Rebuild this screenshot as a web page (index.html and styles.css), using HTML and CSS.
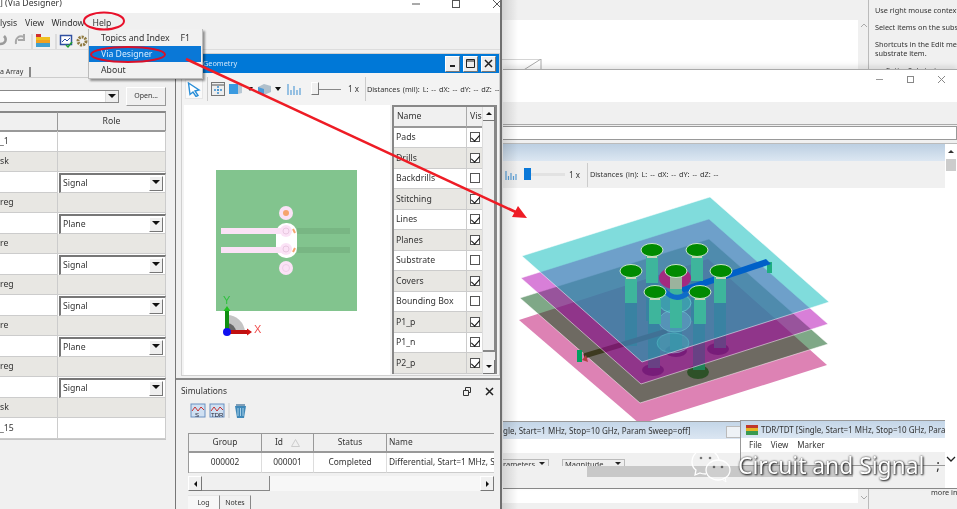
FILE: index.html
```html
<!DOCTYPE html>
<html lang="en">
<head>
<meta charset="utf-8">
<title>Via Designer</title>
<link rel="stylesheet" href="styles.css">
</head>
<body>
<div class="desk">

  <section class="win-back">
    <div class="back-main">
      <div class="back-white">
        <svg class="back-corner" width="40" height="12" viewBox="0 0 40 12"><path d="M0 0H39V12M39 0L20 12" fill="none" stroke="#aaa"/></svg>
        <svg class="back-up" width="8" height="5" viewBox="0 0 8 5"><path d="M1 4L4 1L7 4" fill="none" stroke="#aaa"/></svg>
        <svg class="back-down" width="8" height="5" viewBox="0 0 8 5"><path d="M1 1L4 4L7 1" fill="none" stroke="#aaa"/></svg>
      </div>
    </div>
    <div class="back-help">
      <p class="h1">Use right mouse context menu</p>
      <p class="h2">Select items on the substrate</p>
      <p class="h3">Shortcuts in the Edit menu<br>substrate item.</p>
      <p class="h4">Entire Substrate</p>
      <p class="more">more info</p>
    </div>
  </section>

  <section class="win-b">
    <header class="b-title">
      <svg width="87" height="20" viewBox="0 0 87 20"><path d="M6 9.500H13" stroke="#999"/><rect x="37.500" y="6.500" width="6" height="6" fill="none" stroke="#888"/><path d="M68 6l7 7M75 6l-7 7" stroke="#888" fill="none"/></svg>
    </header>
    <div class="b-menu"></div>
    <div class="b-input"></div>
    <div class="b-doc">
      <div class="b-main">
        <div class="b-blue"></div>
        <div class="b-tools">
          <svg class="bars" width="12" height="10" viewBox="0 0 12 10"><path d="M1 1V10M3.500 6V10M6 3V10M8.500 6V10M11 4V10" stroke="#5aa0d8" stroke-width="1.200"/></svg>
          <div class="b-slider"><span class="b-thumb"></span></div>
          <span class="mult">1 x</span>
          <span class="sep"></span>
          <span class="dist">Distances (in): L: -- dX: -- dY: -- dZ: --</span>
        </div>
        <div class="b-canvas">
          <svg class="model" width="442" height="233" viewBox="503 187 442 233">
            <polygon points="519,319 708,258 827,364 640,423" fill="#dd82b4"/>
            <g class="stems-low">
              <ellipse cx="653" cy="369" rx="11" ry="6" fill="#7a1f70"/>
              <ellipse cx="698" cy="371" rx="11" ry="7" fill="#5d5040"/>
              <ellipse cx="718" cy="348" rx="11" ry="6" fill="#7a1f70"/>
              <ellipse cx="676" cy="350" rx="11" ry="6" fill="#7a1f70"/>
              <rect x="648" y="295" width="12" height="72" fill="#3eb59c"/>
              <rect x="693" y="295" width="12" height="74" fill="#3eb59c"/>
              <rect x="625" y="275" width="12" height="70" fill="#3eb59c"/>
              <rect x="714" y="275" width="12" height="72" fill="#3eb59c"/>
              <rect x="670" y="275" width="12" height="74" fill="#3eb59c"/>
              <rect x="646" y="250" width="12" height="70" fill="#3eb59c"/>
              <rect x="691" y="250" width="12" height="70" fill="#3eb59c"/>
            </g>
            <polygon points="520,297 709,238 828,343 640,402" fill="#00510f" fill-opacity=".5" stroke="#fff" stroke-opacity=".5"/>
            <path d="M584 355L667 330" stroke="#3d3a20" stroke-width="5"/>
            <polygon points="521,277 709,218 828,323 641,383" fill="#b100b1" fill-opacity=".5" stroke="#fff" stroke-opacity=".5"/>
            <ellipse cx="673" cy="342" rx="16" ry="10" fill="#7fc0c0" fill-opacity=".3" stroke="#bde" stroke-opacity=".4"/>
            <ellipse cx="675" cy="320" rx="16" ry="11" fill="#c0a0e0" fill-opacity=".45" stroke="#dde" stroke-opacity=".5"/>
            <ellipse cx="675" cy="302" rx="16" ry="10" fill="#50c8b0" fill-opacity=".45" stroke="#dff" stroke-opacity=".6"/>
            <polygon points="522,255 710,196 829,301 642,361" fill="#0fbdbd" fill-opacity=".53" stroke="#fff" stroke-opacity=".5"/>
            <rect x="577" y="349" width="5" height="12" fill="#00a060"/>
            <path d="M582 359L588 361L586 354Z" fill="#b04040"/>
            <rect x="767" y="261" width="5" height="11" fill="#1fae80"/>
            <ellipse cx="675" cy="277" rx="16" ry="11" fill="#a32a80"/>
            <path d="M680 287L766 258L771 263L684 292Z" fill="#0060c8"/>
            <rect x="670" y="275" width="12" height="52" fill="#3eb59c"/>
            <rect x="670" y="276" width="12" height="12" fill="#9bb39d"/>
            <path d="M664 289Q675 302 688 292" fill="none" stroke="#0f6cc8" stroke-width="5"/>
            <rect x="646" y="252" width="12" height="30" fill="#3eb59c"/>
            <rect x="691" y="252" width="12" height="28" fill="#3eb59c"/>
            <rect x="625" y="273" width="12" height="29" fill="#3eb59c"/>
            <rect x="714" y="273" width="12" height="29" fill="#3eb59c"/>
            <rect x="649" y="295" width="12" height="28" fill="#3eb59c"/>
            <rect x="694" y="295" width="12" height="28" fill="#3eb59c"/>
            <g fill="#c8d0b4">
              <rect x="647" y="254" width="10" height="3"/>
              <rect x="692" y="254" width="10" height="3"/>
              <rect x="626" y="275" width="10" height="3"/>
              <rect x="716" y="275" width="10" height="3"/>
              <rect x="650" y="296" width="10" height="3"/>
              <rect x="695" y="296" width="10" height="3"/>
            </g>
            <g fill="#008a00" stroke="#c8e8c8" stroke-width="1">
              <ellipse cx="652" cy="249" rx="11" ry="6.500"/>
              <ellipse cx="697" cy="249" rx="11" ry="6.500"/>
              <ellipse cx="631" cy="270" rx="11" ry="6.500"/>
              <ellipse cx="721" cy="270" rx="11" ry="6.500"/>
              <ellipse cx="676" cy="270" rx="11" ry="6.500"/>
              <ellipse cx="655" cy="291" rx="11" ry="6.500"/>
              <ellipse cx="700" cy="291" rx="11" ry="6.500"/>
            </g>
          </svg>
        </div>
        <div class="b-result">
          <div class="res-title"><span>gle, Start=1 MHz, Stop=10 GHz, Param Sweep=off]</span><span class="res-btn"></span></div>
          <div class="res-menu"></div>
          <div class="res-bar">
            <span class="drop d1">rameters<i></i></span>
            <span class="drop d2">Magnitude<i></i></span>
          </div>
          <div class="res-bottom"><span class="res-scroll"></span></div>
        </div>
      </div>
      <div class="b-scroll"><span class="b-up"></span><span class="b-scrollthumb"></span></div>
    </div>
    <section class="win-tdr">
      <div class="tdr-title">
        <svg width="12" height="10" viewBox="0 0 12 10"><rect width="12" height="3" fill="#c0392b"/><rect y="3" width="12" height="3" fill="#e6b422"/><rect y="6" width="12" height="4" fill="#3a9a50"/></svg>
        <span>TDR/TDT [Single, Start=1 MHz, Stop=10 GHz, Param Sweep=off]</span>
      </div>
      <div class="tdr-menu"><span>File</span><span>View</span><span>Marker</span></div>
      <div class="tdr-bar"></div>
    </section>
  </section>

  <section class="win-a">
    <header class="a-title">
      <span>] (Via Designer)</span>
      <div class="a-ctl">
        <svg width="100" height="10" viewBox="0 0 100 10"><path d="M6 4H14" stroke="#555"/><rect x="46.500" y="0.500" width="7" height="7" fill="none" stroke="#555"/><path d="M87 0l8 8M95 0l-8 8" stroke="#555" fill="none"/></svg>
      </div>
    </header>
    <nav class="a-menu"><span class="m1">lysis</span><span class="m2">View</span><span class="m3">Window</span><span class="m4">Help</span></nav>
    <div class="a-tools">
      <svg width="96" height="17" viewBox="0 0 96 17">
        <path d="M0 11C6 11 7 6 4 3" fill="none" stroke="#9a9a9a" stroke-width="2.500"/>
        <path d="M16 11C15 5 19 2 24 4M24 1V7H18" fill="none" stroke="#a8a8a8" stroke-width="2"/>
        <path d="M32 1V16" stroke="#c8c8c8"/>
        <rect x="36" y="1" width="5" height="3" fill="#d03030"/><rect x="36" y="4" width="14" height="3" fill="#f0c020"/><rect x="36" y="7" width="14" height="3" fill="#f0a020"/><rect x="36" y="10" width="14" height="4" fill="#40a0d0"/>
        <path d="M56 1V16" stroke="#c8c8c8"/>
        <rect x="60.500" y="2.500" width="11" height="9" fill="#fff" stroke="#3050a0" stroke-width="1.500"/>
        <path d="M62 9L65 6L67 8L70 5" stroke="#3050a0" fill="none"/><path d="M66 12L68 14L72 9" stroke="#20a030" stroke-width="1.500" fill="none"/>
        <circle cx="82" cy="8" r="4" fill="none" stroke="#8f7a40" stroke-width="3" stroke-dasharray="2 1"/>
      </svg>
    </div>
    <div class="a-body">
      <aside class="pane">
        <div class="tabs"><span class="tab">a Array</span></div>
        <div class="file-row">
          <div class="combo"><span class="combo-btn"><i class="caret"></i></span></div>
          <button class="open">Open...</button>
        </div>
        <div class="stack">
          <div class="hc"></div><div class="hc">Role</div>
          <div class="c">_1</div><div class="c"></div>
          <div class="c g">sk</div><div class="c g"></div>
          <div class="c"></div><div class="c sel"><span>Signal</span><b class="sel-btn"><i class="caret"></i></b></div>
          <div class="c g">reg</div><div class="c g"></div>
          <div class="c"></div><div class="c sel"><span>Plane</span><b class="sel-btn"><i class="caret"></i></b></div>
          <div class="c g">re</div><div class="c g"></div>
          <div class="c"></div><div class="c sel"><span>Signal</span><b class="sel-btn"><i class="caret"></i></b></div>
          <div class="c g">reg</div><div class="c g"></div>
          <div class="c"></div><div class="c sel"><span>Signal</span><b class="sel-btn"><i class="caret"></i></b></div>
          <div class="c g">re</div><div class="c g"></div>
          <div class="c"></div><div class="c sel"><span>Plane</span><b class="sel-btn"><i class="caret"></i></b></div>
          <div class="c g">reg</div><div class="c g"></div>
          <div class="c"></div><div class="c sel"><span>Signal</span><b class="sel-btn"><i class="caret"></i></b></div>
          <div class="c g">sk</div><div class="c g"></div>
          <div class="c">_15</div><div class="c"></div>
        </div>
      </aside>
      <main class="work">
        <section class="geo">
          <div class="geo-title">
            <span class="geo-name">Geometry</span>
            <div class="geo-btns">
              <span class="wb"><svg width="9" height="9" viewBox="0 0 9 9"><path d="M2 7H7" stroke="#222" stroke-width="2"/></svg></span>
              <span class="wb"><svg width="9" height="9" viewBox="0 0 9 9"><path d="M.5.5H8.500V8.500H.5Z M.5 2H8.500" fill="none" stroke="#222"/></svg></span>
              <span class="wb"><svg width="9" height="9" viewBox="0 0 9 9"><path d="M1 1L8 8M8 1L1 8" stroke="#222" stroke-width="1.500"/></svg></span>
            </div>
          </div>
          <div class="geo-tools">
            <span class="pick"><svg width="14" height="15" viewBox="0 0 14 15"><path d="M1.500 1L12 8L8 9L11 13.500L9 14.500L6 10L3 12.500Z" fill="#fff" stroke="#2a8fd8" stroke-width="1.400"/></svg></span>
            <span class="sep"></span>
            <svg class="ti" width="71" height="14" viewBox="0 0 71 14">
              <rect x=".5" y=".5" width="13" height="13" fill="#eee" stroke="#777"/><path d="M1 3H13" stroke="#555"/><path d="M7 4V12M3 8H11" stroke="#3a8fd0" stroke-dasharray="2 1" stroke-width="1.500"/>
              <rect x="18" y="2" width="9" height="10" fill="#3a9ae0"/><path d="M27 2L31 4V11L27 12Z" fill="#b8c8d4"/>
              <path d="M36 5H42L39 9Z" fill="#111"/>
              <path d="M47 5L53 2L60 4V10L53 13L47 10Z" fill="#b0c0cc"/><path d="M47 5L53 7V13L47 10Z" fill="#4a9ad8"/>
              <path d="M64 5H70L67 9Z" fill="#111"/>
            </svg>
            <svg class="ti2" width="14" height="11" viewBox="0 0 14 11"><path d="M1 0V11M4 6V11M7 2V11M10 6V11M13 4V11" stroke="#5aa0d8" stroke-width="1.200"/></svg>
            <div class="geo-slider"><span class="geo-thumb"></span></div>
            <span class="mult">1 x</span>
            <span class="sep s2"></span>
            <span class="dist">Distances (mil): L: -- dX: -- dY: -- dZ: --</span>
          </div>
          <div class="geo-body">
            <div class="geo-canvas">
              <svg width="206" height="270" viewBox="184 105 206 270">
                <rect x="216" y="170" width="141" height="141" fill="#82c48e"/>
                <rect x="297" y="228" width="53" height="6" fill="#78b683"/>
                <rect x="297" y="247" width="53" height="6" fill="#78b683"/>
                <rect x="276" y="223" width="21" height="35" rx="10" fill="#fff"/>
                <rect x="221" y="228" width="61" height="6" fill="#fbe2f6"/>
                <rect x="221" y="247" width="61" height="6" fill="#fbe2f6"/>
                <circle cx="286" cy="231" r="6" fill="#fbe2f6"/><circle cx="286" cy="231" r="3" fill="none" stroke="#e8c8e0"/>
                <circle cx="286" cy="249" r="6" fill="#fbe2f6"/><circle cx="286" cy="249" r="3" fill="none" stroke="#e8c8e0"/>
                <circle cx="286" cy="213" r="7" fill="#fbe2f6"/><circle cx="286" cy="213" r="3" fill="#f6a46e"/>
                <circle cx="286" cy="268" r="7" fill="#fbe2f6"/><circle cx="286" cy="268" r="3.500" fill="none" stroke="#eed0e8"/>
                <path d="M293 229L295 233M295 248L293 252" stroke="#f6a46e" stroke-width="2"/>
                <path d="M227 332V315A18 18 0 0 1 245 332Z" fill="#c4c4c4"/>
                <path d="M227 332V323A9 9 0 0 1 236 332Z" fill="#666"/>
                <path d="M227 332V311" stroke="#109010" stroke-width="4"/><path d="M223.500 311L227 306L230.500 311Z" fill="#20c020"/>
                <path d="M227 332H247" stroke="#c01010" stroke-width="4"/><path d="M247 328.500L252 332L247 335.500Z" fill="#d01010"/>
                <circle cx="227" cy="332" r="4" fill="#1010f0"/>
                <text x="223" y="304" class="ax-y">Y</text>
                <text x="254" y="333" class="ax-x">X</text>
              </svg>
            </div>
            <div class="vis">
              <div class="vis-grid">
                <div class="vh">Name</div><div class="vh vh2">Vis</div>
                <div class="vc">Pads</div><div class="vk"><i class="ck on"></i></div>
                <div class="vc g">Drills</div><div class="vk g"><i class="ck on"></i></div>
                <div class="vc">Backdrills</div><div class="vk"><i class="ck"></i></div>
                <div class="vc g">Stitching</div><div class="vk g"><i class="ck on"></i></div>
                <div class="vc">Lines</div><div class="vk"><i class="ck on"></i></div>
                <div class="vc g">Planes</div><div class="vk g"><i class="ck on"></i></div>
                <div class="vc">Substrate</div><div class="vk"><i class="ck"></i></div>
                <div class="vc g">Covers</div><div class="vk g"><i class="ck on"></i></div>
                <div class="vc">Bounding Box</div><div class="vk"><i class="ck"></i></div>
                <div class="vc g">P1_p</div><div class="vk g"><i class="ck on"></i></div>
                <div class="vc">P1_n</div><div class="vk"><i class="ck on"></i></div>
                <div class="vc g">P2_p</div><div class="vk g"><i class="ck on"></i></div>
              </div>
              <div class="vis-scroll">
                <span class="vs-btn"><i class="up"></i></span>
                <span class="vs-track"></span>
                <span class="vs-btn"><i class="caret small"></i></span>
              </div>
            </div>
          </div>
        </section>
        <section class="sims">
          <div class="sims-head">
            <span>Simulations</span>
            <svg width="32" height="9" viewBox="0 0 32 9"><path d="M1.500 3.500H6.500V8.500H1.500ZM3.500 3V.5H8.500V5.500H7" fill="none" stroke="#333"/><path d="M24 1L31 8M31 1L24 8" stroke="#222" stroke-width="1.500"/></svg>
          </div>
          <div class="sims-tools">
            <svg width="62" height="17" viewBox="0 0 62 17">
              <rect x="2" y="2" width="14" height="13" fill="#cfe0f2" stroke="#6a90c0"/><path d="M3 9L6 5L9 9L12 5L15 8" stroke="#c83030" fill="none"/><text x="6" y="15" class="mini">S</text>
              <rect x="21" y="2" width="14" height="13" fill="#cfe0f2" stroke="#6a90c0"/><path d="M22 9L25 5L28 9L31 5L34 8" stroke="#c83030" fill="none"/><text x="22" y="15" class="mini">TDR</text>
              <path d="M40 1V16" stroke="#ccc"/>
              <path d="M46 4H57L55 16H48Z" fill="#3f88b8"/><path d="M47 2H56V4H47Z" fill="#7f9fb8"/><path d="M49 6V14M51.500 6V14M54 6V14" stroke="#a8d0e8"/>
            </svg>
          </div>
          <div class="sim-table">
            <div class="st-h">Group</div><div class="st-h id">Id<svg width="9" height="8" viewBox="0 0 9 8"><path d="M4.500.5L8.500 7.500H.5Z" fill="none" stroke="#ccc"/></svg></div><div class="st-h">Status</div><div class="st-h name">Name</div>
            <div class="st-c">000002</div><div class="st-c">000001</div><div class="st-c">Completed</div><div class="st-c name">Differential, Start=1 MHz, Stop=10 GHz</div>
          </div>
          <div class="hscroll">
            <span class="hbtn"><i class="left"></i></span>
            <span class="hthumb"></span>
            <span class="hrest"></span>
            <span class="hbtn"><i class="right"></i></span>
          </div>
          <div class="log-tabs"><span class="lt on">Log</span><span class="lt">Notes</span></div>
        </section>
      </main>
    </div>
  </section>

  <div class="help-menu">
    <div class="hm-item"><span>Topics and Index</span><span>F1</span></div>
    <div class="hm-item hm-on"><span>Via Designer</span></div>
    <div class="hm-item"><span>About</span></div>
  </div>

  <svg class="anno" width="957" height="509" viewBox="0 0 957 509">
    <ellipse cx="104" cy="21" rx="20" ry="8.500" fill="none" stroke="#e8102a" stroke-width="2"/>
    <ellipse cx="128" cy="54.500" rx="37" ry="7.500" fill="none" stroke="#d8102a" stroke-width="2"/>
    <path d="M186 59L520 214" stroke="#ee1c25" stroke-width="2.500"/>
    <path d="M527 218L512 217L518 206Z" fill="#ee1c25"/>
  </svg>

  <div class="mark">
    <svg class="mark-icon" width="47" height="36" viewBox="0 0 47 36">
      <path d="M15 27C13 27 11 27 9 26L4 28L5 23C2 21 1 18 1 15C1 8 7 2 14 2C21 2 27 7 28 13" fill="none" stroke="#fff" stroke-width="1.300"/>
      <ellipse cx="27" cy="23" rx="12" ry="10" fill="#fff" fill-opacity=".12" stroke="#fff" stroke-width="1.300"/>
      <path d="M31 32L35 35L34 30" fill="none" stroke="#fff"/>
      <circle cx="10" cy="11" r="1.300" fill="#777"/><circle cx="19" cy="11" r="1.300" fill="#777"/>
      <circle cx="23" cy="20" r="1.300" fill="#666"/><circle cx="31" cy="20" r="1.300" fill="#666"/>
    </svg>
    <span class="mark-text">Circuit and Signal</span>
    <span class="mark-dot">;</span>
    <svg class="mark-chev" width="10" height="6" viewBox="0 0 10 6"><path d="M1 1L5 5L9 1" fill="none" stroke="#222" stroke-width="1.300"/></svg>
  </div>
</div>
</body>
</html>
```

FILE: styles.css
```css
* { box-sizing: border-box; }
html, body { margin: 0; padding: 0; }
body {
  width: 957px;
  height: 509px;
  overflow: hidden;
  background: #f0f0f0;
  font: 8.700px/1.200 "Noto Sans", "DejaVu Sans", sans-serif;
  color: #333;
}
.desk { position: relative; width: 957px; height: 509px; overflow: hidden; filter: blur(.35px); }
p { margin: 0; }
i, b { font-style: normal; font-weight: normal; display: block; }

/* back window */
.win-back {
  position: absolute; left: 502px; top: 0; width: 455px; height: 509px;
  display: grid; grid-template-columns: 367px 88px; background: #f0f0f0;
}
.back-main { padding-top: 20px; padding-bottom: 6px; border-right: 1px solid #bbb; }
.back-white { position: relative; height: 100%; background: #fff; margin-right: 10px; }
.back-corner { position: absolute; left: 0; top: 39px; }
.back-up, .back-down { position: absolute; left: 358px; }
.back-up { top: 3px; }
.back-down { bottom: 3px; }
.back-help { position: relative; padding: 6px 0 0 6px; white-space: nowrap; font-size: 7.300px; overflow: hidden; }
.back-help .h1, .back-help .h2, .back-help .h3 { line-height: 9px; margin-bottom: 8px; }
.back-help .h4 { padding-left: 11px; }
.more { position: absolute; left: 62px; top: 488px; }

/* front window */
.win-b {
  position: absolute; left: 503px; top: 69px; width: 454px; height: 420px;
  background: #f0f0f0; border-top: 1px solid #aaa; border-bottom: 1px solid #888;
  box-shadow: 0 -3px 5px rgba(0,0,0,.1);
  display: flex; flex-direction: column;
}
.b-title { height: 32px; background: #fff; display: flex; justify-content: flex-end; }
.b-menu { height: 23px; background: #f0f0f0; border-bottom: 1px solid #aaa; }
.b-input { height: 14px; margin: 1px 0 0; background: #fff; border: 1px solid #999; border-left: 0; }
.b-doc { flex: 1; margin-top: 3px; display: flex; min-height: 0; border-top: 1px solid #bbb; }
.b-main { width: 442px; display: flex; flex-direction: column; }
.b-blue { height: 17px; background: linear-gradient(#bccfe2, #dce7f2); flex: none; }
.b-tools { height: 27px; flex: none; display: flex; align-items: center; background: #f0f0f0; font-size: 7.300px; white-space: nowrap; }
.bars { margin-left: 2px; }
.b-slider { position: relative; width: 41px; height: 3px; margin-left: 7px; background: #e2e2e2; }
.b-thumb { position: absolute; left: 0; top: -5px; width: 7px; height: 12px; background: #0a78d8; }
.mult { font-size: 8px; margin-left: 4px; }
.sep { width: 1px; height: 24px; background: #ccc; flex: none; }
.b-tools .sep { margin-left: 7px; margin-right: 2px; }
.dist { word-spacing: 1px; }
.b-canvas { flex: none; height: 233px; background: #fff; overflow: hidden; }
.model { display: block; }
.b-result { flex: 1; display: flex; flex-direction: column; min-height: 0; font-size: 8px; }
.res-title { height: 18px; background: linear-gradient(#c4d6e8, #dbe6f2); border-top: 1px solid #999; display: flex; align-items: center; white-space: nowrap; position: relative; }
.res-btn { position: absolute; left: 223px; top: 4px; width: 15px; height: 12px; background: #eef2f6; border: 1px solid #bbb; }
.res-menu { height: 14px; background: #fff; flex: none; }
.res-bar { height: 13px; flex: none; display: flex; align-items: flex-end; overflow: hidden; }
.drop { height: 7px; background: #eee; border: 1px solid #bbb; border-bottom: 0; font-size: 7.500px; line-height: 9px; display: flex; justify-content: space-between; overflow: hidden; }
.drop i { width: 0; height: 0; margin: 2px 3px; border: 3px solid transparent; border-top-color: #222; }
.d1 { width: 46px; border-left: 0; }
.d2 { width: 63px; margin-left: 13px; padding-left: 2px; }
.res-bottom { flex: 1; background: #f0f0f0; }
.res-scroll { display: block; margin-left: 84px; width: 266px; height: 11px; background: #c8c8c8; }
.b-scroll { flex: 1; background: #fff; display: flex; flex-direction: column; align-items: center; }
.b-up { width: 0; height: 0; margin: 3px 0 6px; border: 3px solid transparent; border-bottom-color: #333; }
.b-scrollthumb { width: 10px; height: 12px; background: #ccc; }
.win-tdr {
  position: absolute; left: 237px; top: 350px; width: 205px; height: 46px;
  background: #f0f0f0; border: 1px solid #999; border-right: 0; overflow: hidden; font-size: 8px;
}
.tdr-title { height: 17px; background: linear-gradient(#c4d6e8, #dbe6f2); display: flex; align-items: center; gap: 3px; padding-left: 5px; white-space: nowrap; }
.tdr-title svg { flex: none; }
.tdr-menu { height: 14px; background: #fff; display: flex; align-items: center; gap: 9px; padding-left: 8px; }
.tdr-bar { height: 14px; }

/* left window */
.win-a {
  position: absolute; left: 0; top: 0; width: 502px; height: 509px;
  background: #f0f0f0; border-right: 2px solid #6f6f6f;
  display: flex; flex-direction: column;
}
.win-a::after {
  content: ""; position: absolute; left: 100%; top: 0; margin-left: 2px;
  width: 16px; height: 100%;
  background: linear-gradient(90deg, rgba(0,0,0,.13), rgba(0,0,0,0));
}
.a-title { height: 13px; background: #fff; display: flex; justify-content: space-between; line-height: 7px; overflow: hidden; }
.a-ctl { margin-right: -6px; height: 10px; flex: none; }
.a-ctl svg { display: block; }
.a-menu { height: 20px; position: relative; display: flex; align-items: center; background: #f0f0f0; }
.m1 { width: 25px; }
.m2 { width: 26.500px; }
.m3 { width: 41px; }
.a-tools { height: 17px; border-bottom: 1px solid #ddd; flex: none; }
.a-tools svg { display: block; }
.a-body { flex: 1; display: flex; min-height: 0; }
.pane { width: 176px; flex: none; border-right: 1px solid #777; padding-right: 9px; }
.tabs { height: 28px; display: flex; align-items: flex-end; border-bottom: 1px solid #ccc; flex: none; }
.tab { height: 10px; width: 31px; border-right: 2px solid #888; font-size: 7px; line-height: 9px; white-space: nowrap; }
.file-row { display: flex; align-items: center; gap: 7px; height: 19px; margin-top: 9px; }
.combo { width: 120px; height: 13px; background: #fff; border: 1px solid #888; border-left: 0; display: flex; justify-content: flex-end; }
.combo-btn { width: 13px; background: #efefef; border-left: 1px solid #ddd; display: flex; align-items: center; justify-content: center; }
.caret { width: 0; height: 0; margin-top: 3px; border: 4px solid transparent; border-top: 4px solid #111; }
.caret.small { border-width: 3px; border-top-width: 3px; }
.open { width: 40px; height: 19px; padding: 0; background: #f0f0f0; border: 1px solid #fff; border-right-color: #999; border-bottom-color: #999; font: inherit; font-size: 7px; color: #333; }
.stack {
  margin-top: 5px; width: 166px; display: grid; grid-template-columns: 58px 108px;
  grid-auto-rows: 20.470px; background: #fff; border-bottom: 1px solid #c4c4c4; border-right: 1px solid #c4c4c4;
}
.hc { display: flex; align-items: center; justify-content: center; background: #f0f0f0; border-top: 2px solid #888; border-right: 1px solid #999; border-bottom: 2px solid #999; height: 21px; }
.c { display: flex; align-items: center; border-bottom: 1px solid #ccc; border-right: 1px solid #ccc; overflow: hidden; }
.g { background: #e8e7e3; }
.sel { position: relative; border-left: 2px solid #777; border-top: 2px solid #777; padding-left: 2px; margin: 1px 0 0 1px; }
.sel-btn { position: absolute; right: 2px; top: 1px; width: 14px; height: 15px; background: #efefef; border: 1px solid #fff; border-right-color: #777; border-bottom-color: #777; display: flex; justify-content: center; }
.work { flex: 1; min-width: 0; display: flex; flex-direction: column; }
.geo { margin: 3px 0 0 5px; width: 319px; height: 323px; flex: none; background: #f3f3f3; border: 1px solid #d0d0d0; display: flex; flex-direction: column; }
.geo-title { height: 19px; flex: none; background: #0078d7; color: #cfe6fa; display: flex; align-items: center; justify-content: flex-end; position: relative; font-size: 7.300px; }
.geo-name { position: absolute; left: 21px; top: 5px; }
.geo-btns { display: flex; gap: 3px; margin-right: 3px; }
.wb { width: 15px; height: 16px; background: #eee; border: 1px solid #fff; border-right-color: #777; border-bottom-color: #777; display: flex; align-items: center; justify-content: center; }
.geo-tools { height: 32px; flex: none; display: flex; align-items: center; padding-left: 3px; font-size: 7.300px; white-space: nowrap; }
.pick { width: 18px; height: 20px; background: #fafafa; border: 1px solid #e6e6e6; display: flex; align-items: center; justify-content: center; flex: none; }
.geo-tools .sep { margin: 0 3px 0 4px; }
.ti { flex: none; }
.ti2 { margin-left: 5px; flex: none; }
.geo-slider { position: relative; width: 30px; height: 1px; margin-left: 10px; background: #888; flex: none; }
.geo-thumb { position: absolute; left: 0; top: -7px; width: 8px; height: 13px; background: #f0f0f0; border: 1px solid #fff; border-right-color: #777; border-bottom-color: #777; }
.geo-tools .mult { margin-left: 7px; }
.geo-tools .s2 { margin: 0 1px 0 6px; }
.geo-body { flex: 1; display: flex; min-height: 0; padding-left: 2px; }
.geo-canvas { width: 206px; height: 270px; background: #fff; flex: none; }
.geo-canvas svg { display: block; }
.ax-y { font: 11px "Liberation Sans", sans-serif; fill: #30c040; }
.ax-x { font: 11px "Liberation Sans", sans-serif; fill: #f05050; }
.vis { margin-left: 2px; width: 105px; height: 269px; border: 2px solid #888; border-bottom: 0; display: flex; overflow: hidden; background: #fff; }
.vis-grid { width: 88px; display: grid; grid-template-columns: 73px 15px; grid-auto-rows: 20.500px; flex: none; align-content: start; }
.vh { background: #f0f0f0; border-bottom: 2px solid #999; border-right: 1px solid #aaa; display: flex; align-items: center; padding-left: 3px; }
.vh2 { border-right: 0; overflow: hidden; }
.vc { display: flex; align-items: center; padding-left: 2px; border-bottom: 1px solid #ccc; border-right: 1px solid #ccc; white-space: nowrap; }
.vk { display: flex; align-items: center; justify-content: center; border-bottom: 1px solid #ccc; }
.ck { position: relative; width: 10px; height: 10px; background: #fff; border: 1px solid #555; }
.ck.on::after { content: ""; position: absolute; left: 2px; top: 0; width: 4px; height: 7px; border: solid #111; border-width: 0 1.500px 1.500px 0; transform: rotate(42deg); }
.vis-scroll { flex: 1; display: flex; flex-direction: column; background: #f0f0f0; border-left: 1px solid #ddd; }
.vs-btn { height: 14px; display: flex; align-items: center; justify-content: center; flex: none; background: #f4f4f4; border-right: 1px solid #777; border-bottom: 1px solid #777; }
.vs-track { flex: 1; border-bottom: 2px solid #888; border-right: 1px solid #888; margin-bottom: 8px; }
.up { width: 0; height: 0; border: 3px solid transparent; border-bottom-color: #111; margin-bottom: 3px; }
.sims { flex: 1; min-height: 0; border-top: 2px solid #888; margin-top: 2px; padding-left: 1px; display: flex; flex-direction: column; font-size: 8.400px; }
.sims-head { display: flex; justify-content: space-between; align-items: center; height: 22px; padding: 0 6px 0 4px; flex: none; }
.sims-tools { height: 24px; padding-left: 12px; flex: none; }
.sim-table { margin-left: 11px; margin-top: 7px; width: 306px; height: 40px; display: grid; grid-template-columns: 73px 52px 73px 108px; grid-template-rows: 19px 20px; background: #fff; border-top: 1px solid #999; border-left: 1px solid #999; overflow: hidden; flex: none; }
.st-h { background: #f0f0f0; border-right: 1px solid #999; border-bottom: 2px solid #999; display: flex; align-items: center; justify-content: center; gap: 8px; white-space: nowrap; }
.st-c { border-right: 1px solid #ddd; border-bottom: 1px solid #ccc; display: flex; align-items: center; justify-content: center; white-space: nowrap; overflow: hidden; }
.st-h.name, .st-c.name { justify-content: flex-start; padding-left: 2px; border-right: 0; }
.hscroll { margin: 3px 0 0 11px; width: 306px; height: 15px; display: flex; flex: none; background: #f7f7f7; }
.hbtn { width: 14px; display: flex; align-items: center; justify-content: center; background: #f0f0f0; border: 1px solid #fff; border-right-color: #777; border-bottom-color: #777; flex: none; }
.hthumb { width: 68px; background: #f0f0f0; border-right: 1px solid #888; border-bottom: 1px solid #888; flex: none; }
.hrest { flex: 1; }
.left { width: 0; height: 0; border: 3px solid transparent; border-right-color: #111; margin-right: 3px; }
.right { width: 0; height: 0; border: 3px solid transparent; border-left-color: #111; margin-left: 3px; }
.log-tabs { margin: 4px 0 0 11px; display: flex; height: 14px; font-size: 7px; flex: none; }
.lt { width: 31px; text-align: center; line-height: 13px; border-right: 1px solid #888; border-top: 1px solid #e6e6e6; }
.lt.on { background: #f7f7f7; width: 32px; }
.mini { font: 6px "Liberation Sans", sans-serif; fill: #223; }

/* overlays */
.help-menu {
  position: absolute; left: 88px; top: 29px; width: 115px; height: 50px;
  background: #f1f1f1; border: 1px solid #bbb; border-width: 0 1px 1px 1px;
  box-shadow: 2px 2px 2px rgba(0,0,0,.4);
  padding-top: 1px;
  display: flex; flex-direction: column;
}
.hm-item { height: 16px; padding: 0 12px 0 12px; display: flex; justify-content: space-between; align-items: center; }
.hm-on { background: #0a78d7; color: #d8ecff; margin-right: 1px; }
.anno { position: absolute; left: 0; top: 0; }
.mark { position: absolute; left: 691px; top: 447px; display: flex; align-items: center; color: #fff; white-space: nowrap; }
.mark-icon { flex: none; }
.mark-text { margin-left: 0; font: 22.800px "Noto Sans", sans-serif; text-shadow: 0 0 2px #222, 1px 1px 2px #222; }
.mark-dot { margin-left: 12px; font-size: 14px; color: #333; }
.mark-chev { position: absolute; left: 255px; top: 9px; }
```
